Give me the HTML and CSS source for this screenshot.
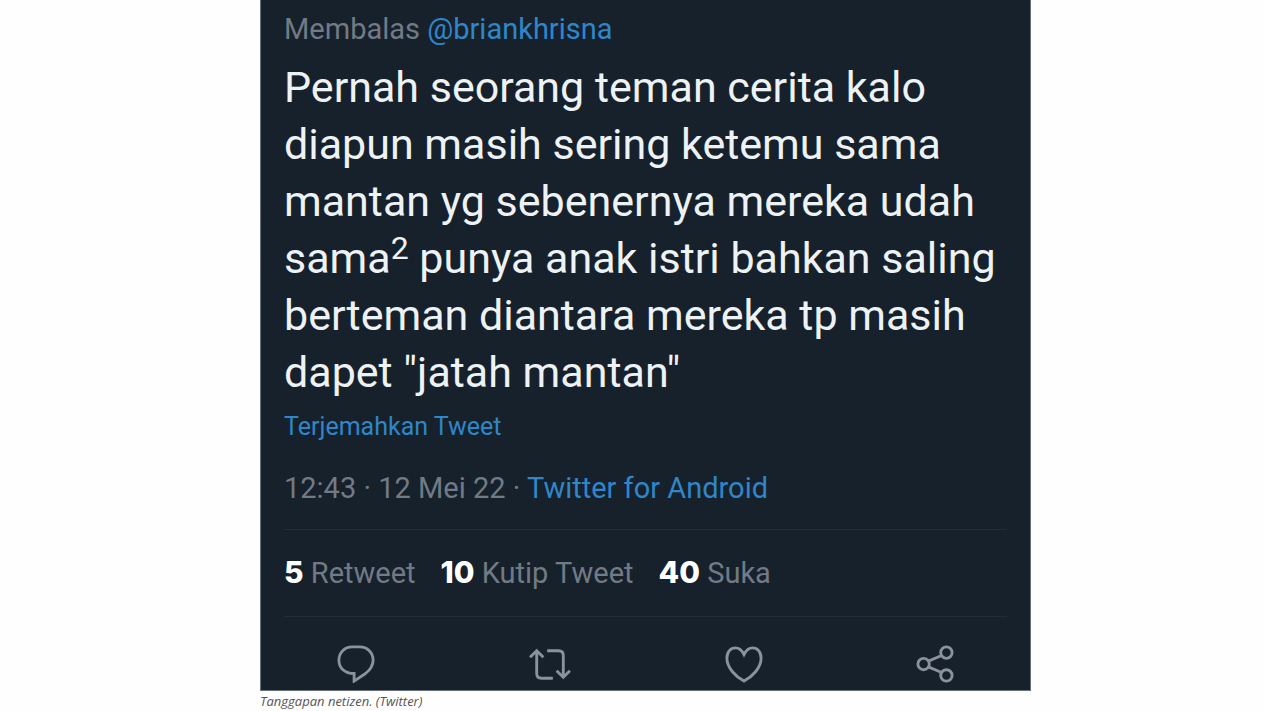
FILE: index.html
```html
<!DOCTYPE html>
<html lang="id">

<head>
    <meta charset="UTF-8">
    <title>Tanggapan netizen</title>
    <link rel="stylesheet" href="styles.css">
</head>

<body>
    <figure class="page">
        <article class="tweet">
            <p class="reply">Membalas <a href="#">@briankhrisna</a></p>

            <p class="text">
                Pernah seorang teman cerita kalo<br>
                diapun masih sering ketemu sama<br>
                mantan yg sebenernya mereka udah<br>
                sama<sup>2</sup> punya anak istri bahkan saling<br>
                berteman diantara mereka tp masih<br>
                dapet "jatah mantan"
            </p>

            <a class="translate" href="#">Terjemahkan Tweet</a>

            <p class="meta">12:43 · 12 Mei 22 · <a href="#">Twitter for Android</a></p>

            <div class="stats">
                <a href="#"><b>5</b> Retweet</a>
                <a href="#"><b>10</b> Kutip Tweet</a>
                <a href="#"><b>40</b> Suka</a>
            </div>

            <div class="actions">
                <button type="button" aria-label="Balas">
                    <svg viewBox="0 0 40 40">
                        <path d="M16 2h8c8 0 14 6 14 14 0 6-3 10-8 14l-12 8v-8C8 30 2 24 2 16 2 8 8 2 16 2z" />
                    </svg>
                </button>
                <button type="button" aria-label="Retweet">
                    <svg class="wide" viewBox="0 0 46 40">
                        <path d="M2 13l7-7 7 7M9 6v24q0 5 5 5h12M20 6h12q5 0 5 5v23M30 27l7 7 7-7" />
                    </svg>
                </button>
                <button type="button" aria-label="Suka">
                    <svg viewBox="0 0 40 40">
                        <path d="M20 38C11 33 2 24 2 14 2 7 6 3 11 3c4 0 7 3 9 7 2-4 5-7 9-7 5 0 9 4 9 11 0 10-9 19-18 24z" />
                    </svg>
                </button>
                <button type="button" aria-label="Bagikan">
                    <svg viewBox="0 0 40 40">
                        <circle cx="8" cy="20" r="6" />
                        <circle cx="32" cy="8" r="6" />
                        <circle cx="32" cy="32" r="6" />
                        <path d="M13 17l14-6M13 23l14 6" />
                    </svg>
                </button>
            </div>
        </article>
        <figcaption>Tanggapan netizen. (Twitter)</figcaption>
    </figure>
</body>

</html>
```
FILE: styles.css
```css
body {
    margin: 0;
    background-color: #fefefe;
    font-family: Roboto, "Liberation Sans", sans-serif;
}

p {
    margin: 0;
}

a {
    color: #2f86c9;
    text-decoration: none;
}

.page {
    display: grid;
    grid-template-columns: 260fr 771fr 234fr;
    margin: 0;
}

.tweet {
    grid-column: 2;
    padding: 11px 23px 0;
    background-color: #17212c;
    border: 1px solid #69717b;
    border-top: none;
    color: #717a85;
    font-size: 29px;
    line-height: 36px;
}

.text {
    margin-top: 12px;
    color: #edf2f5;
    font-size: 43px;
    line-height: 57px;
    white-space: nowrap;
}

.text sup {
    font-size: 32px;
    line-height: 0;
    vertical-align: 14px;
}

.translate {
    display: block;
    margin-top: 8px;
    font-size: 25px;
}

.meta {
    margin-top: 25px;
}

.stats {
    display: flex;
    gap: 25px;
    margin-top: 23px;
    padding: 25px 0;
    border-top: 1px solid #232d39;
    border-bottom: 1px solid #232d39;
}

.stats a {
    color: #717a85;
}

.stats b {
    color: #fff;
    font-family: Inter, sans-serif;
    font-size: 30px;
    font-weight: 800;
    line-height: 1;
}

.actions {
    display: flex;
    justify-content: space-around;
    padding: 28px 0 7px;
    margin: 0 -23px;
}

.actions button {
    display: flex;
    justify-content: center;
    padding: 0;
    border: none;
    background: none;
    cursor: pointer;
}

.actions svg {
    width: 38px;
    height: 38px;
    fill: none;
    stroke: #89929d;
    stroke-width: 3;
}

.actions .wide {
    width: 44px;
}

/* keterangan gambar */
figcaption {
    grid-column: 2;
    color: #555;
    font-family: "Open Sans", sans-serif;
    font-size: 13px;
    font-style: italic;
    line-height: 20px;
}
```
